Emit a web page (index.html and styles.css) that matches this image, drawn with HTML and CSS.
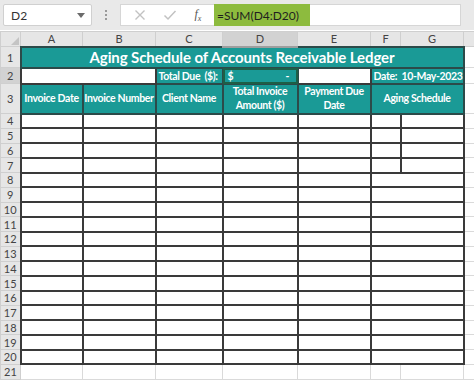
FILE: index.html
```html
<!DOCTYPE html>
<html lang="en">

<head>
    <meta charset="UTF-8">
    <meta name="viewport" content="width=device-width, initial-scale=1.0">
    <title>Aging Schedule of Accounts Receivable Ledger</title>
    <link rel="stylesheet" href="styles.css">
</head>

<body>
    <div class="toolbar">
        <div class="name-box">
            <span>D2</span>
            <svg class="caret" width="8" height="5" viewBox="0 0 8 5"><path d="M0 0h8L4 5z" fill="#6b6b6b"/></svg>
        </div>
        <div class="grip">
            <span></span><span></span><span></span>
        </div>
        <div class="formula-bar">
            <div class="bar-buttons">
                <svg width="12" height="12" viewBox="0 0 12 12"><path d="M1.5 1.5l9 9M10.5 1.5l-9 9" stroke="#c2c2c2" stroke-width="1.4" fill="none"/></svg>
                <svg width="14" height="12" viewBox="0 0 14 12"><path d="M1.5 6.5l3.5 3.5 7.5-8" stroke="#c2c2c2" stroke-width="1.5" fill="none"/></svg>
                <span class="fx">f<sub>x</sub></span>
            </div>
            <div class="formula">=SUM(D4:D20)</div>
        </div>
    </div>

    <table class="sheet">
        <colgroup>
            <col class="c-row">
            <col class="c-a">
            <col class="c-b">
            <col class="c-c">
            <col class="c-d">
            <col class="c-e">
            <col class="c-f">
            <col class="c-g">
            <col class="c-x">
        </colgroup>
        <tr class="col-heads">
            <th class="corner"><svg width="8" height="8" viewBox="0 0 8 8"><path d="M8 0v8H0z" fill="#c4c4c4"/></svg></th>
            <th>A</th>
            <th>B</th>
            <th>C</th>
            <th class="selected">D</th>
            <th>E</th>
            <th>F</th>
            <th>G</th>
            <th></th>
        </tr>
        <tr class="r-title">
            <th>1</th>
            <td colspan="7" class="teal title">Aging Schedule of Accounts Receivable Ledger</td>
            <td class="grid"></td>
        </tr>
        <tr class="r-info">
            <th class="selected">2</th>
            <td colspan="2" class="box"></td>
            <td class="teal label">Total Due &nbsp;($):</td>
            <td class="teal amount"><span>$</span><span>-</span></td>
            <td class="box"></td>
            <td colspan="2" class="teal label">Date: &nbsp;10-May-2023</td>
            <td class="grid"></td>
        </tr>
        <tr class="r-head">
            <th>3</th>
            <td class="teal head">Invoice Date</td>
            <td class="teal head">Invoice Number</td>
            <td class="teal head">Client Name</td>
            <td class="teal head">Total Invoice<br>Amount ($)</td>
            <td class="teal head">Payment Due<br>Date</td>
            <td colspan="2" class="teal head">Aging Schedule</td>
            <td class="grid"></td>
        </tr>
        <tr class="r-data"><th>4</th><td class="box"></td><td class="box"></td><td class="box"></td><td class="box"></td><td class="box"></td><td class="box"></td><td class="box"></td><td class="grid"></td></tr>
        <tr class="r-data"><th>5</th><td class="box"></td><td class="box"></td><td class="box"></td><td class="box"></td><td class="box"></td><td class="box"></td><td class="box"></td><td class="grid"></td></tr>
        <tr class="r-data"><th>6</th><td class="box"></td><td class="box"></td><td class="box"></td><td class="box"></td><td class="box"></td><td class="box"></td><td class="box"></td><td class="grid"></td></tr>
        <tr class="r-data"><th>7</th><td class="box"></td><td class="box"></td><td class="box"></td><td class="box"></td><td class="box"></td><td class="box"></td><td class="box"></td><td class="grid"></td></tr>
        <tr class="r-data"><th>8</th><td class="box"></td><td class="box"></td><td class="box"></td><td class="box"></td><td class="box"></td><td colspan="2" class="box"></td><td class="grid"></td></tr>
        <tr class="r-data"><th>9</th><td class="box"></td><td class="box"></td><td class="box"></td><td class="box"></td><td class="box"></td><td colspan="2" class="box"></td><td class="grid"></td></tr>
        <tr class="r-data"><th>10</th><td class="box"></td><td class="box"></td><td class="box"></td><td class="box"></td><td class="box"></td><td colspan="2" class="box"></td><td class="grid"></td></tr>
        <tr class="r-data"><th>11</th><td class="box"></td><td class="box"></td><td class="box"></td><td class="box"></td><td class="box"></td><td colspan="2" class="box"></td><td class="grid"></td></tr>
        <tr class="r-data"><th>12</th><td class="box"></td><td class="box"></td><td class="box"></td><td class="box"></td><td class="box"></td><td colspan="2" class="box"></td><td class="grid"></td></tr>
        <tr class="r-data"><th>13</th><td class="box"></td><td class="box"></td><td class="box"></td><td class="box"></td><td class="box"></td><td colspan="2" class="box"></td><td class="grid"></td></tr>
        <tr class="r-data"><th>14</th><td class="box"></td><td class="box"></td><td class="box"></td><td class="box"></td><td class="box"></td><td colspan="2" class="box"></td><td class="grid"></td></tr>
        <tr class="r-data"><th>15</th><td class="box"></td><td class="box"></td><td class="box"></td><td class="box"></td><td class="box"></td><td colspan="2" class="box"></td><td class="grid"></td></tr>
        <tr class="r-data"><th>16</th><td class="box"></td><td class="box"></td><td class="box"></td><td class="box"></td><td class="box"></td><td colspan="2" class="box"></td><td class="grid"></td></tr>
        <tr class="r-data"><th>17</th><td class="box"></td><td class="box"></td><td class="box"></td><td class="box"></td><td class="box"></td><td colspan="2" class="box"></td><td class="grid"></td></tr>
        <tr class="r-data"><th>18</th><td class="box"></td><td class="box"></td><td class="box"></td><td class="box"></td><td class="box"></td><td colspan="2" class="box"></td><td class="grid"></td></tr>
        <tr class="r-data"><th>19</th><td class="box"></td><td class="box"></td><td class="box"></td><td class="box"></td><td class="box"></td><td colspan="2" class="box"></td><td class="grid"></td></tr>
        <tr class="r-data"><th>20</th><td class="box"></td><td class="box"></td><td class="box"></td><td class="box"></td><td class="box"></td><td colspan="2" class="box"></td><td class="grid"></td></tr>
        <tr class="r-data"><th>21</th><td class="grid"></td><td class="grid"></td><td class="grid"></td><td class="grid"></td><td class="grid"></td><td class="grid"></td><td class="grid"></td><td class="grid"></td></tr>
    </table>
</body>

</html>
```

FILE: styles.css
```css
* {
    margin: 0;
    padding: 0;
    box-sizing: border-box;
}

body {
    font-family: 'Lato', 'Liberation Sans', sans-serif;
    background: #ffffff;
    width: 474px;
    height: 380px;
    overflow: hidden;
    color: #222;
}

/* formula bar */
.toolbar {
    height: 30px;
    background: #e9e9e9;
    display: flex;
    align-items: center;
    padding: 3px 13px 3px 3px;
}

.name-box {
    width: 89px;
    height: 22px;
    background: #fff;
    border: 1px solid #d0d0d0;
    border-radius: 2px;
    display: flex;
    align-items: center;
    justify-content: space-between;
    padding: 0 6px 0 7px;
    font-size: 12px;
    color: #333;
}

.grip {
    width: 28px;
    display: flex;
    flex-direction: column;
    align-items: center;
    gap: 2px;
}

.grip span {
    width: 2px;
    height: 2px;
    background: #9a9a9a;
}

.formula-bar {
    flex: 1;
    height: 22px;
    background: #fff;
    border: 1px solid #d6d6d6;
    display: flex;
    align-items: stretch;
}

.bar-buttons {
    width: 93px;
    display: flex;
    align-items: center;
    justify-content: space-around;
    padding: 0 4px;
}

.fx {
    font-family: 'Liberation Serif', serif;
    font-style: italic;
    font-size: 12px;
    color: #555;
}

.fx sub {
    font-size: 8px;
}

.formula {
    width: 96px;
    background: #8dbb3e;
    font-size: 12px;
    color: #1f1f1f;
    display: flex;
    align-items: center;
    padding-left: 3px;
    margin: -1px 0;
}

/* sheet */
.sheet {
    width: 474px;
    table-layout: fixed;
    border-collapse: collapse;
    margin-top: 1px;
}

.c-row { width: 20px; }
.c-a { width: 62px; }
.c-b { width: 73px; }
.c-c { width: 67px; }
.c-d { width: 75px; }
.c-e { width: 73px; }
.c-f { width: 30px; }
.c-g { width: 63px; }
.c-x { width: 11px; }

.sheet th {
    background: #e6e6e6;
    border: 1px solid #cfcfcf;
    font-weight: normal;
    font-size: 11px;
    color: #444;
    text-align: center;
}

.sheet th.selected {
    background: #d2d2d2;
}

.col-heads th.selected {
    border-bottom: 2px solid #9e9e9e;
}

.col-heads {
    height: 15px;
}

.corner {
    text-align: right !important;
    vertical-align: bottom;
    padding: 0 1px 1px 0;
    line-height: 0;
}

.r-title { height: 21px; }
.r-info { height: 16px; }
.r-head { height: 30px; }
.r-data { height: 14.75px; }

.sheet td {
    padding: 0;
}

.teal {
    background: #1a9a96;
    color: #fff;
    font-weight: bold;
    border: 2px solid #2c4a49;
    text-align: center;
    white-space: nowrap;
    overflow: hidden;
}

.title {
    font-size: 15px;
    letter-spacing: -0.1px;
}

.label {
    font-size: 10.5px;
    letter-spacing: -0.35px;
    text-align: left;
    padding-left: 2px !important;
}

.amount {
    font-size: 10.5px;
    outline: 2px solid #1d5f47;
    outline-offset: -2px;
}

.amount span:first-child {
    float: left;
    padding-left: 4px;
}

.amount span:last-child {
    float: right;
    padding-right: 7px;
}

.head {
    font-size: 10.5px;
    letter-spacing: -0.35px;
    line-height: 13.5px;
}

.box {
    border: 2px solid #3a3a3a;
    background: #fff;
}

.grid {
    border: 1px solid #dadada;
}
```
